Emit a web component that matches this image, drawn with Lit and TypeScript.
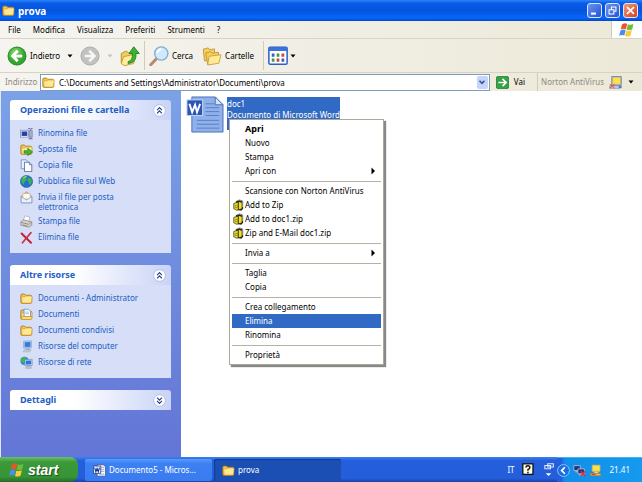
import { LitElement, html, svg, css, nothing, TemplateResult } from "lit";
import { customElement, property } from "lit/decorators.js";

const folder = svg`<path d="M1 4q0-1.500 1.500-1.500h3l1.500 1.500h6q1.500 0 1.500 1.500v7q0 1.500-1.500 1.500h-10.500q-1.500 0-1.500-1.500z" fill="#f1c54c" stroke="#a9781c"/><path d="M2 7q0-1 1.500-1h3l1-1h6q1.500 0 1.300 1.500l-.8 6q-.2 1-1.300 1h-10z" fill="#ffe893" stroke="#d2a236" stroke-width=".7"/>`;

const flag = svg`<path d="M3 2.500q3-2 5.200-.6l-1.300 5.400q-2.200-1.300-5.200.2z" fill="#e8552b"/><path d="M8.900 2.200q2.600 1.300 5.600-.2l-1.400 5.500q-2.700 1.400-5.500.1z" fill="#6fbb3a"/><path d="M1.500 8.400q2.900-1.600 5.200-.3l-1.400 5.400q-2.300-1.300-5.200.3z" fill="#4c8cf0"/><path d="M7.400 8.400q2.600 1.300 5.500-.1l-1.400 5.500q-2.600 1.500-5.500.1z" fill="#fccc30"/>`;

const icons: Record<string, TemplateResult> = {
  folder,
  flag,
  back: svg`<circle cx="8" cy="8" r="7.600" fill="#3da639"/><circle cx="8" cy="8" r="7" fill="url(#gGreen)" stroke="#2c8a2c" stroke-width=".6"/><path d="M8.600 3.800L4.400 8l4.200 4.200M4.800 8h7.400" fill="none" stroke="#fff" stroke-width="2.200"/>`,
  forward: svg`<circle cx="8" cy="8" r="7.200" fill="#c2c2c0" stroke="#acaca9" stroke-width=".8"/><path d="M7.400 3.800L11.600 8l-4.200 4.200M11.200 8H3.800" fill="none" stroke="#f6f6f4" stroke-width="2"/>`,
  up: svg`<path d="M1 6l4-2 2 1.500 3-1v9l-6 2-3-2z" fill="#f0cd5e" stroke="#b48c2a" stroke-width=".7"/><path d="M1 14l2-5.500 9-2-1 7.500-7.500 1.700z" fill="#ffec9c" stroke="#c29a34" stroke-width=".7"/><path d="M6.500 12.500q4-1 3.300-6.500H7.200L11 .6 15.400 6h-2.600q.6 7.500-6.300 8z" fill="#3fb234" stroke="#1f7f1d" stroke-width=".7"/>`,
  search: svg`<path d="M1.400 15L6.500 9.600" stroke="#b98a68" stroke-width="2.400" stroke-linecap="round"/><circle cx="9.800" cy="6" r="5.300" fill="#cfeafc" stroke="#86aed4" stroke-width="1.100"/><path d="M6.500 5.500q.8-2.700 3.300-3" stroke="#fff" stroke-width="1.500" fill="none"/>`,
  folders: svg`<path d="M1 2.500l4-1 1 1.400 4-.6v8L2 12z" fill="#f3cf62" stroke="#c1942e" stroke-width=".7"/><path d="M3 5.500l4-1 1.200 1.200 5-.7v8l-8.700 1.800z" fill="#f3cf62" stroke="#c1942e" stroke-width=".7"/><path d="M4.500 15.200l1.200-7 9.500-1.200-1.700 6.800z" fill="#ffea98" stroke="#c99f38" stroke-width=".7"/>`,
  views: svg`<rect x=".7" y="1" width="14.600" height="13.500" rx="1" fill="#fff" stroke="#2b5fc4" stroke-width="1.200"/><path d="M.7 1h14.600v3H.7z" fill="#3a73dc"/><path d="M3 6h2.200v2.500H3zM10.800 10h2.200v2.500h-2.200z" fill="#3c62c0"/><path d="M6.900 6h2.200v2.500H6.900zM3 10h2.200v2.500H3z" fill="#3f9a50"/><path d="M10.800 6h2.200v2.500h-2.200zM6.900 10h2.200v2.500H6.900z" fill="#c44a40"/>`,
  go: svg`<rect x=".5" y=".5" width="15" height="15" rx="2" fill="#36a146" stroke="#1f7d30"/><path d="M8 3.500l4.500 4.500L8 12.500M12 8H3" fill="none" stroke="#fff" stroke-width="2"/>`,
  norton: svg`<rect x="3.500" y=".8" width="11.500" height="10.500" fill="#c8c8c2" stroke="#707070"/><rect x="5.200" y="2.500" width="8.200" height="7" fill="#ffe23c"/><path d="M1 12h12v3H1z" fill="#d9d5ee" stroke="#716ba0" stroke-width=".8"/><path d="M1 10l6 5M7 10l-6 5" stroke="#dc4a3c" stroke-width="1.200"/><path d="M12 12h3.500v3H12z" fill="#4c78c8"/>`,
  rename: svg`<rect x=".5" y="4" width="10" height="8.500" fill="#f2f4fc" stroke="#8890b8"/><path d="M2 5.500h7v5.500H2z" fill="#2341a8"/><path d="M10 2h2.500M13.500 2h2M10.500 14.500h5M13.200 2v12.500" stroke="#5a6590" stroke-width="1.100"/><path d="M11.500 4.500h3.600v8h-3.600z" fill="#aab0d0" stroke="#6b749c" stroke-width=".7"/>`,
  move: svg`${folder}<path d="M5 9.500h4.500V6.500L15.500 11l-6 4.500v-3H5z" fill="#44b83a" stroke="#1c7a1a" stroke-width=".8"/>`,
  copy: svg`<path d="M1.500 1h6l2.500 2.500V12h-8.500z" fill="#e8f1ff" stroke="#6b86b8"/><path d="M5.500 4h6l3 3v8.500h-9z" fill="#fff" stroke="#45659f"/><path d="M11.500 4v3h3" fill="#bcd0f0" stroke="#45659f" stroke-width=".8"/>`,
  globe: svg`<circle cx="8" cy="8" r="7.500" fill="#2772c8" stroke="#1d4f96" stroke-width=".7"/><path d="M2 5q2-4 6-4 1 2-1 3 2 2-1 4-2 1-1 4-4-2-3-7zM10 3l4 2q1.500 4-1 7-3-1-2-4-3-2-1-5z" fill="#3eb548"/><path d="M4 4q2-2 4-2" stroke="#bfe8ff" fill="none"/>`,
  mail: svg`<path d="M1.500 6.500L8 1l6.500 5.500v8h-13z" fill="#b9cdf0" stroke="#7c93bd"/><path d="M3.500 3h9v7h-9z" fill="#fff9ea" stroke="#d6ae78" stroke-width=".9"/><path d="M1.500 7L8 11l6.500-4v7.500h-13z" fill="#e9f1ff" stroke="#7f95bc" stroke-width=".8"/>`,
  printer: svg`<path d="M4 7L6 1l6 1.500L11 8z" fill="#fff" stroke="#9aa2b4" stroke-width=".8"/><path d="M1 9l3-3 10.500 2.500v4L11 15 1 12.500z" fill="#d5d2c8" stroke="#85837c" stroke-width=".9"/><path d="M1 9l10 2.500 3.500-3M3.500 12l5.500 1.600" fill="none" stroke="#7f7d78" stroke-width=".9"/>`,
  remove: svg`<path d="M2 3l11.500 11.500" stroke="#c02038" stroke-width="2.400" stroke-linecap="round"/><path d="M13.500 2L3 14.500" stroke="#d02f40" stroke-width="2" stroke-linecap="round"/>`,
  docs: svg`${folder}<path d="M5 1.500h5.500L13 4v6.500H5z" fill="#fff" stroke="#5c87c8"/><path d="M6.500 5h4.500M6.500 7h4.500" stroke="#8fb0e0"/><path d="M2 10.500h12.500v2q0 1.500-1.500 1.500H3.500Q2 14 2 12.500z" fill="#ffe07c" stroke="#bd8f2c" stroke-width=".8"/>`,
  computer: svg`<path d="M4.500 1.500L14 1v8.500l-9.500.5z" fill="#bcd4f4" stroke="#7f98c0" stroke-width=".8"/><path d="M5.800 2.800l7-.4v5.800l-7 .4z" fill="#2d7de0"/><path d="M8 10h3.500v2H8zM5.500 12h8l-1.500 2.500h-8z" fill="#cbd3e4" stroke="#8b96b0" stroke-width=".6"/>`,
  network: svg`<circle cx="5.500" cy="6" r="5" fill="#3686d4"/><path d="M1 5q1-3.500 4.500-4 3 1 1.500 3-2 1-2.500 5-3.500-1-3.500-4z" fill="#42ba4a"/><path d="M6 4.500l9-.5v7.500l-9 .5z" fill="#c5d8f5" stroke="#7288b4" stroke-width=".8"/><path d="M7.200 5.700l6.600-.3v4.800l-6.600.4z" fill="#2b74d8"/><path d="M8.500 12.500h4.500l1 2.500H7z" fill="#c4cbdc" stroke="#808ca8" stroke-width=".6"/>`,
  zip: svg`<path d="M3.500 3.500Q8-1 13.500 3v10L11 15.500 6 14.500z" fill="#20201a"/><path d="M1 6l8-2.500 3 1.500v8l-7 2-4-2z" fill="#f4e41c" stroke="#222" stroke-width=".9"/><path d="M7 4.500v10" stroke="#222" stroke-width="1.300"/><path d="M5 2.500q4-2.500 7.500.5v8" fill="none" stroke="#a8a8a0" stroke-width="1.200"/><path d="M3 8.500h2.500v3H3z" fill="#fff87a" stroke="#544d0b" stroke-width=".7"/>`,
  word: svg`<path d="M5 1h8l2.500 2.500V15H5z" fill="#fff" stroke="#38518e"/><path d="M9 4h5M9 6.500h5M9 9h5M7 12.500h7" stroke="#7f95c4"/><path d="M.5 2.500h9v9h-9z" fill="#fff" stroke="#1d3990"/><path d="M2 4.500l1.500 5L5 5.500l1.500 4 1.500-5" fill="none" stroke="#1d3990" stroke-width="1.400"/>`,
  doc: svg`<path d="M6 1h24l8 8v28H6z" fill="#8fb0e8" stroke="#4c70b8"/><path d="M30 1v8h8z" fill="#d4e3fc" stroke="#4c70b8"/><path d="M20 8h9M20 12h14M20 16h14M20 20h14M11 25h23M11 29h23M11 33h23" stroke="#567fc8"/><rect x="1" y="4" width="16" height="16" fill="#2c56b4" stroke="#c0d2f4"/><path d="M3.500 8l2.800 8.500 3-7.500 2 7.500 3.200-8.500" fill="none" stroke="#fff" stroke-width="2"/>`,
  up2: svg`<circle cx="8" cy="8" r="7.200" fill="#fff" stroke="#aab8dc"/><path d="M5 7.500l3-3 3 3M5 11.500l3-3 3 3" fill="none" stroke="#26438c" stroke-width="1.500"/>`,
  down2: svg`<circle cx="8" cy="8" r="7.200" fill="#fff" stroke="#aab8dc"/><path d="M5 4.500l3 3 3-3M5 8.500l3 3 3-3" fill="none" stroke="#26438c" stroke-width="1.500"/>`,
  caret: svg`<path d="M3 5h10l-5 6z" fill="currentColor"/>`,
  sub: svg`<path d="M5 1l7 7-7 7z" fill="currentColor"/>`,
  chevron: svg`<path d="M4 6l4 4 4-4" fill="none" stroke="#3b5591" stroke-width="2.600"/>`,
  min: svg`<path d="M3 11h7v3H3z" fill="#fff"/>`,
  restore: svg`<path d="M6.500 6V3h6.500v6h-3M3 7h7v6H3z" fill="none" stroke="#fff" stroke-width="1.500"/>`,
  close: svg`<path d="M3 3l10 10M13 3L3 13" stroke="#fff" stroke-width="2.400"/>`,
  help: svg`<rect x="1" y="1" width="12.500" height="13" fill="#fffde2" stroke="#111" stroke-width="1.600"/><path d="M4.800 5.500q0-2 2.500-2t2.400 2q0 1.500-2.400 2.700v1.300M7.300 10.800v1.800" fill="none" stroke="#111" stroke-width="1.800"/>`,
  tools: svg`<path d="M7 1h7v4H7zM3.500 3h7v4h-7z" fill="#2a62dc" stroke="#dce8ff" stroke-width="1.300"/><path d="M4.500 12.500h7L8 16z" fill="#fff"/>`,
  hide: svg`<circle cx="8" cy="8" r="7.300" fill="#1c6ee0" stroke="#86c4ff" stroke-width="1.200"/><path d="M9.700 4L5.800 8l3.900 4" fill="none" stroke="#fff" stroke-width="2.200"/>`,
  offline: svg`<path d="M1 2h8v6H1z" fill="#20327e" stroke="#b7c3e4"/><path d="M6 6h8v6H6z" fill="#26306a" stroke="#b7c3e4"/><path d="M3 9.500h2.500M7.500 13.500h5" stroke="#b7c3e4" stroke-width="1.400"/><path d="M9.500 9l5.500 6M15 9l-5.500 6" stroke="#e2303a" stroke-width="1.900"/>`,
  shield: svg`<path d="M4 1.500h9.500V9H4z" fill="#ffe23c" stroke="#c8b878"/><path d="M6.500 9.500h5v2h-5z" fill="#e8dba0"/><path d="M1.500 11.500h13v3h-13z" fill="#f0b93a" stroke="#ad6a34" stroke-width=".7"/><path d="M3 13h5" stroke="#d23a30" stroke-width="1.300"/>`,
};

const icon = (name: string, cls = "", box = 16) =>
  html`<svg class="icon ${cls}" viewBox="0 0 ${box} ${box}" aria-hidden="true">
    <defs><radialGradient id="gGreen" cx=".4" cy=".3"><stop offset="0" stop-color="#8fdc6c"/><stop offset="1" stop-color="#36a534"/></radialGradient></defs>
    ${icons[name]}</svg>`;

const shared = css`
  * { box-sizing: border-box; }
  button, input { font: inherit; color: inherit; margin: 0; padding: 0; border: 0; background: none; }
  button { display: flex; align-items: center; }
  .icon { display: block; flex: none; width: 13px; height: 13px; }
`;

@customElement("task-panel")
export class TaskPanel extends LitElement {
  @property() heading = "";
  @property({ attribute: false }) items: [string, string][] = [];

  static styles = [shared, css`
    :host { display: block; }
    .head { display: flex; align-items: center; justify-content: space-between; height: 20px; padding: 0 5px 0 10px; border-radius: 3px 3px 0 0; background: linear-gradient(90deg, #fff 40%, #c8d3f7); }
    h2 { margin: 0; font-size: 9px; line-height: 12px; color: #215dc6; }
    .toggle .icon { width: 13px; height: 13px; }
    ul { margin: 0; padding: 7px 10px 9px; list-style: none; display: grid; gap: 3px; background: #d6dff7; }
    a { display: flex; gap: 5px; color: #215dc6; text-decoration: none; line-height: 10px; }
    a span { padding-top: 1px; max-width: 108px; }
  `];

  render() {
    const open = this.items.length > 0;
    return html`
      <div class="head">
        <h2>${this.heading}</h2>
        <button class="toggle" aria-label=${this.heading} aria-expanded=${open}>${icon(open ? "up2" : "down2")}</button>
      </div>
      ${open ? html`<ul>${this.items.map(([i, text]) => html`<li><a href="#">${icon(i)}<span>${text}</span></a></li>`)}</ul>` : nothing}
    `;
  }
}

type Entry = { text: string; icon?: string; sub?: boolean; strong?: boolean; active?: boolean };

@customElement("context-menu")
export class ContextMenu extends LitElement {
  @property({ attribute: false }) groups: Entry[][] = [];

  static styles = [shared, css`
    :host { display: block; padding: 2px; background: #fff; border: 1px solid #aca899; box-shadow: 2px 2px 1px #888; color: #000; }
    .group + .group { border-top: 1px solid #b4b0a2; margin-top: 3px; padding-top: 2px; }
    .item { width: 100%; height: 14px; text-align: left; padding-right: 4px; }
    .slot { width: 13px; padding-left: 1px; }
    .slot .icon { width: 12px; height: 12px; }
    .label { flex: 1; }
    .strong { font-weight: bold; font-size: 9px; }
    .active { background: #316ac5; color: #fff; }
    .arrow { width: 8px; height: 8px; }
  `];

  render() {
    return this.groups.map((g) => html`<div class="group" role="group">${g.map((e) => html`
      <button class="item ${e.active ? "active" : ""} ${e.strong ? "strong" : ""}" role="menuitem">
        <span class="slot">${e.icon ? icon(e.icon) : nothing}</span><span class="label">${e.text}</span>${e.sub ? icon("sub", "arrow") : nothing}
      </button>`)}</div>`);
  }
}

@customElement("app-root")
export class AppRoot extends LitElement {
  static styles = [shared, css`
    :host { display: flex; flex-direction: column; min-height: 100vh; font: 8px/12px "Noto Sans", "Open Sans", sans-serif; color: #000; background: #fff; }
    .title { display: flex; align-items: center; gap: 3px; height: 21px; padding: 0 4px 0 2px; color: #fff; background: linear-gradient(#2a86fa, #0a5be8 15%, #0553dc 50%, #0666fc 85%, #0349c4); }
    h1 { flex: 1; margin: 0; font-size: 10px; line-height: 14px; }
    .win { justify-content: center; width: 15px; height: 15px; border: 1px solid #dce6fc; border-radius: 3px; background: linear-gradient(135deg, #6a95f0, #2253d4); }
    .win .icon { width: 11px; height: 11px; }
    .close { background: linear-gradient(135deg, #f09a78, #d8401c); }
    .menubar { display: flex; align-items: stretch; height: 18px; background: linear-gradient(90deg, #f5f4f0, #ece9d8); border-bottom: 1px solid #d8d4c4; }
    .menus { flex: 1; display: flex; gap: 12px; padding-left: 8px; }
    .brand { display: flex; align-items: center; justify-content: center; width: 31px; background: #fff; border-left: 1px solid #d0ccbc; }
    .brand .icon { width: 16px; height: 16px; }
    .tools { display: flex; align-items: center; height: 33px; padding-left: 7px; background: linear-gradient(90deg, #f5f4f0, #ece9d8); }
    .tools .icon { width: 20px; height: 20px; }
    .tools .caret { width: 8px; height: 8px; }
    .tool { gap: 3px; }
    .drop { width: 20px; justify-content: center; }
    .faint { color: #c4c2b8; }
    .rule { width: 1px; align-self: stretch; margin: 2px 4px; background: #d0ccbc; }
    .search { margin-right: 9px; }
    .views { gap: 1px; }
    .cartelle { margin-right: 5px; }
    .address { display: flex; align-items: center; height: 19px; padding-left: 5px; background: linear-gradient(90deg, #f5f4f0, #ece9d8); border-top: 1px solid #d8d4c4; }
    .muted { color: #8c8a80; }
    .address label { width: 35px; }
    .combo { flex: 1; display: flex; align-items: center; gap: 4px; height: 17px; padding: 0 1px; background: #fff; border: 1px solid #7f9db9; }
    .combo input { flex: 1; min-width: 0; height: 13px; }
    .combo .pick { justify-content: center; width: 11px; height: 13px; border-radius: 2px; background: #c4d4fb; }
    .pick .icon { width: 10px; height: 10px; }
    .go { gap: 5px; padding: 0 12px 0 6px; }
    .norton { gap: 5px; height: 100%; padding: 0 7px 0 3px; border-left: 1px solid #d0ccbc; }
    .norton .caret { width: 8px; height: 8px; color: #000; }
    main { flex: 1; display: flex; border-left: 1px solid #dfe6fb; }
    aside { display: flex; flex-direction: column; gap: 12px; width: 180px; padding: 9px 10px 16px 9px; background: linear-gradient(#7ba2e7, #6375d6); }
    .files { flex: 1; padding: 5px; }
    .file { display: flex; position: relative; }
    .file > .icon { width: 38px; height: 38px; }
    .about { margin: 1px 0 0 3px; padding: 1px 0 10px; align-self: flex-start; background: #316ac5; color: #fff; line-height: 11px; }
    .about p { margin: 0; }
    .popup { position: absolute; left: 43px; top: 23px; width: 155px; }
    .taskbar { display: flex; align-items: stretch; height: 25px; color: #fff; background: linear-gradient(#3a80f0, #245edb 15%, #245edb 85%, #1941a5); }
    .start { gap: 3px; width: 78px; padding: 0 9px; border-radius: 0 8px 8px 0; background: linear-gradient(#6cc068, #3c9a3a 20%, #379437 80%, #246b24); font: italic bold 14px/16px "Liberation Sans", sans-serif; text-shadow: 1px 1px 1px #1c4c1c; }
    .start .icon { width: 16px; height: 16px; }
    .tasks { flex: 1; display: flex; gap: 2px; padding: 2px 0 1px 7px; }
    .task { gap: 3px; width: 127px; padding: 0 8px; border-radius: 2px; background: linear-gradient(#5a9bfc, #3c80f2 20%, #3a7cf0); }
    .pressed { background: #1b4fb4; box-shadow: inset 1px 1px 1px #123a8c; }
    .lang { display: flex; align-items: center; gap: 7px; padding-right: 2px; }
    .tray { display: flex; align-items: center; gap: 3px; padding-right: 12px; background: linear-gradient(90deg, #245edb 4px, #128fe8 8px, #159af0); border-top: 1px solid #3cb4fa; }
    time { padding-left: 5px; }
  `];

  private ops: [string, string][] = [
    ["rename", "Rinomina file"], ["move", "Sposta file"], ["copy", "Copia file"], ["globe", "Pubblica file sul Web"],
    ["mail", "Invia il file per posta elettronica"], ["printer", "Stampa file"], ["remove", "Elimina file"],
  ];
  private places: [string, string][] = [
    ["folder", "Documenti - Administrator"], ["docs", "Documenti"], ["folder", "Documenti condivisi"],
    ["computer", "Risorse del computer"], ["network", "Risorse di rete"],
  ];
  private menu: Entry[][] = [
    [{ text: "Apri", strong: true }, { text: "Nuovo" }, { text: "Stampa" }, { text: "Apri con", sub: true }],
    [{ text: "Scansione con Norton AntiVirus" }, { text: "Add to Zip", icon: "zip" }, { text: "Add to doc1.zip", icon: "zip" }, { text: "Zip and E-Mail doc1.zip", icon: "zip" }],
    [{ text: "Invia a", sub: true }],
    [{ text: "Taglia" }, { text: "Copia" }],
    [{ text: "Crea collegamento" }, { text: "Elimina", active: true }, { text: "Rinomina" }],
    [{ text: "Proprietà" }],
  ];

  render() {
    return html`
      <header class="title">
        ${icon("folder")}<h1>prova</h1>
        <button class="win" aria-label="Riduci a icona">${icon("min")}</button>
        <button class="win" aria-label="Ripristina">${icon("restore")}</button>
        <button class="win close" aria-label="Chiudi">${icon("close")}</button>
      </header>
      <nav class="menubar">
        <div class="menus">${["File", "Modifica", "Visualizza", "Preferiti", "Strumenti", "?"].map((m) => html`<button>${m}</button>`)}</div>
        <div class="brand">${icon("flag")}</div>
      </nav>
      <div class="tools">
        <button class="tool">${icon("back")}Indietro</button>
        <button class="drop" aria-label="Cronologia indietro">${icon("caret", "caret")}</button>
        <button class="tool" aria-label="Avanti">${icon("forward")}</button>
        <button class="drop faint" aria-label="Cronologia avanti">${icon("caret", "caret")}</button>
        <button class="tool" aria-label="Livello superiore">${icon("up")}</button>
        <div class="rule"></div>
        <button class="tool search">${icon("search")}Cerca</button>
        <button class="tool cartelle">${icon("folders")}Cartelle</button>
        <div class="rule"></div>
        <button class="views" aria-label="Visualizza">${icon("views")}${icon("caret", "caret")}</button>
      </div>
      <div class="address">
        <label class="muted" for="path">Indirizzo</label>
        <div class="combo">
          ${icon("folder")}
          <input id="path" type="text" .value=${"C:\\Documents and Settings\\Administrator\\Documenti\\prova"} />
          <button class="pick" aria-label="Apri elenco">${icon("chevron")}</button>
        </div>
        <button class="go">${icon("go")}Vai</button>
        <button class="norton muted">Norton AntiVirus ${icon("norton")}${icon("caret", "caret")}</button>
      </div>
      <main>
        <aside>
          <task-panel heading="Operazioni file e cartella" .items=${this.ops}></task-panel>
          <task-panel heading="Altre risorse" .items=${this.places}></task-panel>
          <task-panel heading="Dettagli"></task-panel>
        </aside>
        <section class="files">
          <div class="file">
            ${icon("doc", "", 39)}
            <div class="about"><p>doc1</p><p>Documento di Microsoft Word</p></div>
            <context-menu class="popup" role="menu" .groups=${this.menu}></context-menu>
          </div>
        </section>
      </main>
      <footer class="taskbar">
        <button class="start">${icon("flag")}start</button>
        <div class="tasks">
          <button class="task">${icon("word")}Documento5 - Micros...</button>
          <button class="task pressed">${icon("folder")}prova</button>
        </div>
        <div class="lang"><span>IT</span>${icon("help")}${icon("tools")}</div>
        <div class="tray">${icon("hide")}${icon("offline")}${icon("shield")}<time>21.41</time></div>
      </footer>
    `;
  }
}
